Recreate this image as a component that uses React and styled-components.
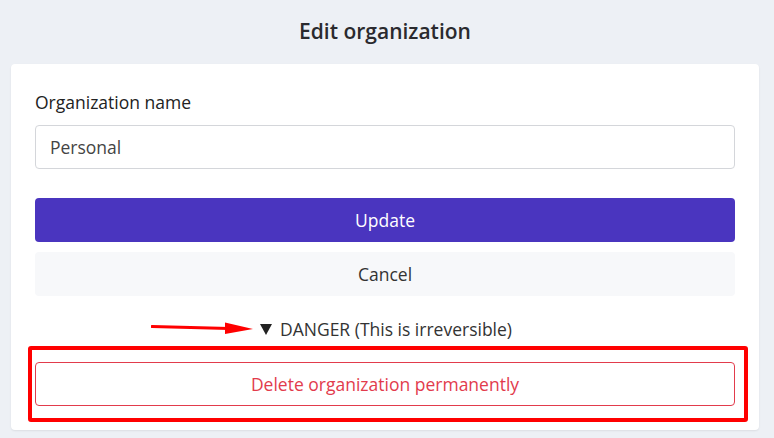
import React from 'react';
import styled, { createGlobalStyle } from 'styled-components';

const GlobalStyle = createGlobalStyle`
  html, body {
    margin: 0;
    padding: 0;
    background: #edf0f5;
    font-family: "Open Sans", "Noto Sans", sans-serif;
    color: #212529;
  }
`

const Page = styled.div`
  width: 774px;
  height: 438px;
  overflow: hidden;
  display: flex;
  flex-direction: column;
`

const Title = styled.h1`
  margin: 0;
  height: 64px;
  display: flex;
  align-items: center;
  justify-content: center;
  font-size: 21px;
  font-weight: 600;
  color: #2a2a2e;
  padding: 0 4px 2px 0;
  box-sizing: border-box;
`

const Card = styled.div`
  width: 748px;
  margin-left: 11px;
  background: #fff;
  border-radius: 4px;
  box-shadow: 0 1px 2px rgba(0, 0, 0, 0.08);
  padding: 26px 24px 8px;
  box-sizing: border-box;
  display: flex;
  flex-direction: column;
`

const Label = styled.label`
  font-size: 17.5px;
  line-height: 24px;
  color: #222;
  margin-bottom: 11px;
`

const Input = styled.input`
  height: 44px;
  box-sizing: border-box;
  border: 1px solid #d4d6da;
  border-radius: 4px;
  padding: 0 14px;
  font-family: inherit;
  font-size: 17.5px;
  color: #444;
  outline: none;
  margin-bottom: 29px;
`

const Button = styled.button`
  height: 44px;
  border: none;
  border-radius: 4px;
  font-family: inherit;
  font-size: 17.5px;
  cursor: pointer;
  background: ${p => p.$primary ? '#4a35bf' : '#f7f8fa'};
  color: ${p => p.$primary ? '#fff' : '#333'};
  margin-bottom: ${p => p.$gap || 0}px;
`

const Danger = styled.details`
  display: flex;
  flex-direction: column;
`

const Summary = styled.summary`
  position: relative;
  list-style: none;
  display: flex;
  align-items: center;
  justify-content: center;
  font-size: 17.5px;
  line-height: 24px;
  color: #333;
  cursor: pointer;
  margin: 0 0 5px;
  padding-left: 2px;
  &::-webkit-details-marker { display: none; }
`

const Caret = styled.span`
  width: 0;
  height: 0;
  border-left: 6px solid transparent;
  border-right: 6px solid transparent;
  border-top: 11px solid #222;
  margin-right: 8px;
`

const Arrow = styled.svg`
  position: absolute;
  left: 116px;
  top: 4px;
`

const Highlight = styled.div`
  border: 4px solid #ff0000;
  border-radius: 3px;
  margin: 0 -13px 0 -7px;
  padding: 12px 9px 12px 3px;
`

const DeleteButton = styled.button`
  width: 100%;
  height: 44px;
  background: #fff;
  border: 1px solid #e23b4c;
  border-radius: 4px;
  color: #e23b4c;
  font-family: inherit;
  font-size: 17.5px;
  cursor: pointer;
`

export default function App() {
  return (
    <Page>
      <GlobalStyle />
      <Title>Edit organization</Title>
      <Card>
        <Label>Organization name</Label>
        <Input defaultValue="Personal" />
        <Button $primary $gap={10}>Update</Button>
        <Button $gap={21}>Cancel</Button>
        <Danger open>
          <Summary>
            <Arrow width="104" height="14" viewBox="0 0 104 14">
              <path d="M1 5.5 L78 7.5" stroke="#ff0000" strokeWidth="3" strokeLinecap="round" />
              <path d="M74 1.5 L102 8 L74 13 Z" fill="#ff0000" />
            </Arrow>
            <Caret />DANGER (This is irreversible)
          </Summary>
          <Highlight>
            <DeleteButton>Delete organization permanently</DeleteButton>
          </Highlight>
        </Danger>
      </Card>
    </Page>
  )
}
